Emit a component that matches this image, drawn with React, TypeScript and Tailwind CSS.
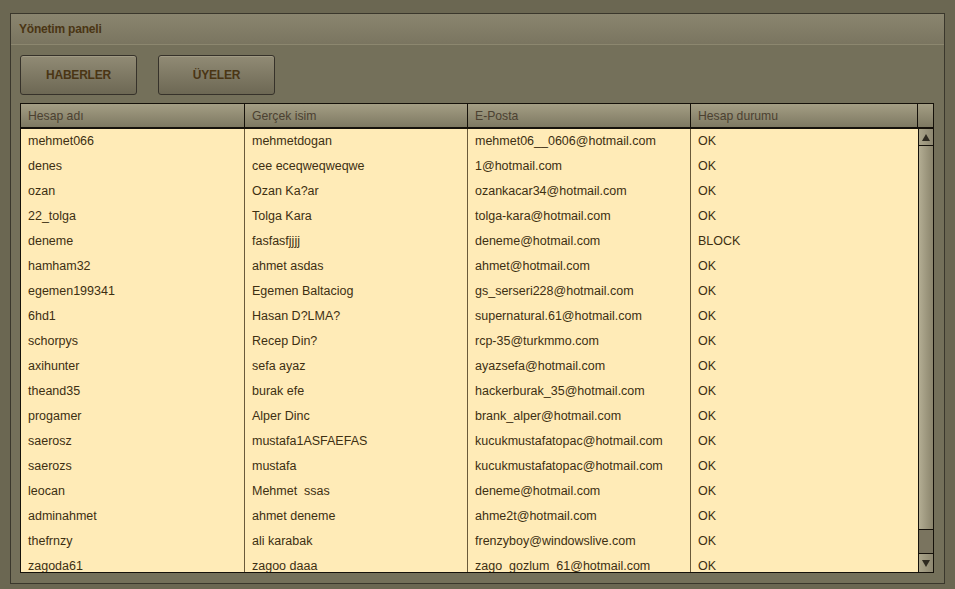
import React from "react";

const rows: [string, string, string, string][] = [
  ["mehmet066", "mehmetdogan", "mehmet06__0606@hotmail.com", "OK"],
  ["denes", "cee eceqweqweqwe", "1@hotmail.com", "OK"],
  ["ozan", "Ozan Ka?ar", "ozankacar34@hotmail.com", "OK"],
  ["22_tolga", "Tolga Kara", "tolga-kara@hotmail.com", "OK"],
  ["deneme", "fasfasfjjjj", "deneme@hotmail.com", "BLOCK"],
  ["hamham32", "ahmet asdas", "ahmet@hotmail.com", "OK"],
  ["egemen199341", "Egemen Baltaciog", "gs_serseri228@hotmail.com", "OK"],
  ["6hd1", "Hasan D?LMA?", "supernatural.61@hotmail.com", "OK"],
  ["schorpys", "Recep Din?", "rcp-35@turkmmo.com", "OK"],
  ["axihunter", "sefa ayaz", "ayazsefa@hotmail.com", "OK"],
  ["theand35", "burak efe", "hackerburak_35@hotmail.com", "OK"],
  ["progamer", "Alper Dinc", "brank_alper@hotmail.com", "OK"],
  ["saerosz", "mustafa1ASFAEFAS", "kucukmustafatopac@hotmail.com", "OK"],
  ["saerozs", "mustafa", "kucukmustafatopac@hotmail.com", "OK"],
  ["leocan", "Mehmet  ssas", "deneme@hotmail.com", "OK"],
  ["adminahmet", "ahmet deneme", "ahme2t@hotmail.com", "OK"],
  ["thefrnzy", "ali karabak", "frenzyboy@windowslive.com", "OK"],
  ["zagoda61", "zagoo daaa", "zago_gozlum_61@hotmail.com", "OK"],
];

const widths = ["w-[224px]", "w-[223px]", "w-[223px]", "w-[227px]"];

function NavButton({ label }: { label: string }) {
  return (
    <button className="flex h-[40px] w-[117px] items-center justify-center rounded-[3px] border border-[#36322a] bg-gradient-to-b from-[#918b75] to-[#6d6854] text-[12px] font-bold tracking-[-0.2px] text-[#4a3514] shadow-[inset_0_1px_0_#a09a84]">
      {label}
    </button>
  );
}

export default function App() {
  return (
    <div
      className="h-[589px] w-[955px] overflow-hidden bg-[#6b6752] px-[10px] pt-[13px]"
      style={{ fontFamily: '"Liberation Sans", Arial, sans-serif' }}
    >
      <div className="h-[571px] w-[935px] border border-[#3a372c] bg-[#74705a]">
        {/* title bar */}
        <div className="flex h-[31px] items-center border-b border-[#8c876f] bg-gradient-to-b from-[#8a856f] to-[#7a7560] px-[8px] text-[12px] font-bold tracking-[-0.2px] text-[#4a3514]">
          Yönetim paneli
        </div>

        <div className="flex gap-[21px] px-[9px] pt-[10px]">
          <NavButton label="HABERLER" />
          <NavButton label="ÜYELER" />
        </div>

        {/* table */}
        <div className="ml-[9px] mt-[8px] w-[914px] border border-[#15110a] text-[12.5px]">
          <div className="flex h-[25px] border-b-2 border-[#15110a] bg-gradient-to-b from-[#a49e84] to-[#7e7962] text-[12.2px] text-[#4b4131]">
            {["Hesap adı", "Gerçek isim", "E-Posta", "Hesap durumu"].map((h, i) => (
              <div key={h} className={`${widths[i]} flex items-center border-r border-[#15110a] pl-[7px] pt-[2px]`}>
                {h}
              </div>
            ))}
            <div className="w-[15px]" />
          </div>

          <div className="flex h-[443px] bg-[#ffebb7]">
            <div className="h-full overflow-hidden">
              {rows.map((r) => (
                <div key={r[0]} className="flex h-[25px] text-[#3d2f12]">
                  {r.map((c, i) => (
                    <div
                      key={i}
                      className={`${widths[i]} flex items-center whitespace-pre pl-[7px] ${i < 3 ? "border-r border-[#6a5a3a]" : ""}`}
                    >
                      {c}
                    </div>
                  ))}
                </div>
              ))}
            </div>

            {/* scrollbar */}
            <div className="flex w-[15px] flex-col border-l border-[#15110a] bg-[#7a745e]">
              <div className="flex h-[17px] items-center justify-center border-b border-[#15110a] bg-gradient-to-r from-[#aaa48a] to-[#8d8770]">
                <svg width="8" height="7" viewBox="0 0 8 7">
                  <path d="M4 0 L8 7 L0 7 Z" fill="#2e2a20" />
                </svg>
              </div>
              <div className="h-[384px] border-b border-[#15110a] bg-gradient-to-r from-[#b3ad93] to-[#8a846c]" />
              <div className="flex-1 bg-[#7a745f]" />
              <div className="flex h-[19px] items-center justify-center border-t border-[#15110a] bg-gradient-to-r from-[#aaa48a] to-[#8d8770]">
                <svg width="8" height="7" viewBox="0 0 8 7">
                  <path d="M0 0 L8 0 L4 7 Z" fill="#2e2a20" />
                </svg>
              </div>
            </div>
          </div>
        </div>
      </div>
    </div>
  );
}
